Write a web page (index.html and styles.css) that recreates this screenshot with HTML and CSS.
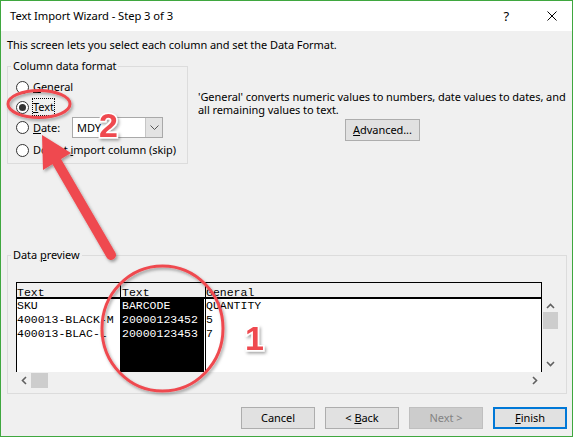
FILE: index.html
```html
<!DOCTYPE html>
<html>
<head>
<meta charset="utf-8">
<title>Text Import Wizard - Step 3 of 3</title>
<link rel="stylesheet" href="styles.css">
</head>
<body>
<div class="window">
  <div class="titlebar">
    <span class="title">Text Import Wizard - Step 3 of 3</span>
    <span class="help">?</span>
    <span class="close"><svg width="10" height="10" viewBox="0 0 10 10"><path d="M0.5 0.5L9.5 9.5M9.5 0.5L0.5 9.5" stroke="#000" stroke-width="1" fill="none"/></svg></span>
  </div>
  <div class="content">
    <p class="intro">This screen lets you select each column and set the Data Format.</p>
    <div class="top-row">
      <fieldset class="group fmt">
        <legend>Column data format</legend>
        <div class="radio-row"><span class="radio"></span><span class="lbl"><u>G</u>eneral</span></div>
        <div class="radio-row"><span class="radio checked"></span><span class="lbl focus"><u>T</u>ext</span></div>
        <div class="radio-row date"><span class="radio"></span><span class="lbl date-lbl"><u>D</u>ate:</span>
          <div class="combo"><span class="combo-text">MDY</span><span class="combo-btn"><svg width="9" height="5" viewBox="0 0 9 5"><path d="M0.5 0.5L4.5 4.5L8.5 0.5" stroke="#555" stroke-width="1" fill="none"/></svg></span></div>
        </div>
        <div class="radio-row skip"><span class="radio"></span><span class="lbl">Do not <u>i</u>mport column (skip)</span></div>
      </fieldset>
      <div class="desc">
        <p class="desc-text">'General' converts numeric values to numbers, date values to dates, and<br>all remaining values to text.</p>
        <div class="adv-wrap"><button class="btn adv"><u>A</u>dvanced...</button></div>
      </div>
    </div>
    <fieldset class="group preview">
      <legend>Data <u>p</u>review</legend>
      <div class="pv">
        <div class="pv-head">
          <span class="h1">Text</span>
          <span class="h2">Text</span>
          <span class="h3">General</span>
        </div>
        <div class="pv-blank"></div>
        <div class="pv-body">
          <div class="b1"><div>SKU</div><div>400013-BLACK-M</div><div>400013-BLAC-L</div></div>
          <div class="b2"><div>BARCODE</div><div>20000123452</div><div>20000123453</div></div>
          <div class="b3"><div>QUANTITY</div><div>5</div><div>7</div></div>
        </div>
        <div class="vscroll">
          <span class="sb-up"><svg width="9" height="6" viewBox="0 0 9 6"><path d="M1 5L4.5 1.5L8 5" stroke="#606060" stroke-width="1.6" fill="none"/></svg></span>
          <span class="vthumb"></span>
          <span class="sb-fill"></span>
          <span class="sb-down"><svg width="9" height="6" viewBox="0 0 9 6"><path d="M1 1L4.5 4.5L8 1" stroke="#606060" stroke-width="1.6" fill="none"/></svg></span>
        </div>
        <div class="hscroll">
          <span class="sb-left"><svg width="6" height="9" viewBox="0 0 6 9"><path d="M5 1L1.5 4.5L5 8" stroke="#606060" stroke-width="1.6" fill="none"/></svg></span>
          <span class="hthumb"></span>
          <span class="sb-fill"></span>
          <span class="sb-right"><svg width="6" height="9" viewBox="0 0 6 9"><path d="M1 1L4.5 4.5L1 8" stroke="#606060" stroke-width="1.6" fill="none"/></svg></span>
        </div>
        <div class="pv-blank"></div>
      </div>
    </fieldset>
    <div class="buttons">
      <button class="btn">Cancel</button>
      <button class="btn">&lt; <u>B</u>ack</button>
      <button class="btn disabled">Next &gt;</button>
      <button class="btn default"><u>F</u>inish</button>
    </div>
  </div>
  <svg class="annot" width="575" height="438" viewBox="0 0 575 438">
    <defs>
      <filter id="sh" x="-30%" y="-30%" width="160%" height="160%">
        <feDropShadow dx="1.5" dy="2" stdDeviation="1.5" flood-color="#000" flood-opacity="0.35"/>
      </filter>
    </defs>
    <g filter="url(#sh)">
      <ellipse cx="39" cy="104" rx="31" ry="13.5" fill="none" stroke="#ef4a50" stroke-width="3"/>
      <ellipse cx="162.5" cy="328.5" rx="60.5" ry="62.5" fill="none" stroke="#ef4a50" stroke-width="3"/>
      <line x1="111" y1="255" x2="57" y2="162" stroke="#ef4a50" stroke-width="10" stroke-linecap="round"/>
      <polygon points="42,135 71,153 43,170" fill="#ef4a50"/>
      <text x="99" y="137" class="num">2</text>
      <text x="245" y="350" class="num">1</text>
    </g>
  </svg>
</div>
</body>
</html>
```

FILE: styles.css
```css
html, body {
  margin: 0;
  padding: 0;
}
body {
  width: 575px;
  height: 438px;
  background: #fff;
  overflow: hidden;
}
.window {
  position: relative;
  box-sizing: border-box;
  width: 573px;
  height: 437px;
  border: 1px solid #3fa73f;
  background: #f0f0f0;
  display: flex;
  flex-direction: column;
  font-family: "Noto Sans", "Open Sans", sans-serif;
  font-size: 11px;
  letter-spacing: -0.06px;
  color: #000;
}
.titlebar {
  height: 30px;
  flex: none;
  background: #fff;
  display: flex;
  align-items: center;
  padding-left: 9px;
  line-height: 16px;
}
.title {
  flex: 1;
  font-size: 11.2px;
}
.help {
  font-size: 13px;
  margin-right: 38px;
}
.close {
  display: flex;
  margin-right: 15px;
}
.content {
  flex: 1;
  display: flex;
  flex-direction: column;
  padding: 0 5px 0 6px;
}
.intro {
  margin: 6px 0 0;
  line-height: 16px;
}
.top-row {
  display: flex;
  margin-top: 5px;
}
.group {
  margin: 0;
  border: 1px solid #dcdcdc;
  min-width: 0;
}
.group legend {
  padding: 0 2px;
  margin-left: -5px;
  line-height: 16px;
}
.fmt {
  box-sizing: border-box;
  width: 181px;
  height: 106px;
  flex: none;
  padding: 3px 0 0 8px;
}
.radio-row {
  display: flex;
  align-items: center;
  height: 20px;
}
.radio-row.date {
  height: 21px;
}
.radio-row.skip {
  margin-top: 1px;
  height: 22px;
}
.radio {
  box-sizing: border-box;
  width: 13px;
  height: 13px;
  flex: none;
  border: 1px solid #333;
  border-radius: 50%;
  background: #fff;
  margin-right: 4px;
  display: flex;
  align-items: center;
  justify-content: center;
}
.radio.checked::after {
  content: "";
  width: 7px;
  height: 7px;
  border-radius: 50%;
  background: #333;
}
.lbl {
  white-space: nowrap;
  line-height: 16px;
}
.focus {
  outline: 1px dotted #000;
  outline-offset: 0;
}
.date-lbl {
  width: 39px;
}
.combo {
  box-sizing: border-box;
  width: 91px;
  height: 21px;
  border: 1px solid #a9a9a9;
  background: #fff;
  display: flex;
}
.combo-text {
  flex: 1;
  padding-left: 4px;
  line-height: 19px;
}
.combo-btn {
  width: 16px;
  background: #e3e3e3;
  border-left: 1px solid #c6c6c6;
  display: flex;
  align-items: center;
  justify-content: center;
}
.desc {
  flex: 1;
  padding: 32px 0 0 10px;
}
.desc-text {
  margin: 0;
  line-height: 13px;
  white-space: nowrap;
}
.adv-wrap {
  display: flex;
  justify-content: center;
  margin-top: 3px;
}
.btn {
  box-sizing: border-box;
  width: 74px;
  height: 22px;
  border: 1px solid #adadad;
  background: #e1e1e1;
  font: inherit;
  letter-spacing: inherit;
  color: #000;
  padding: 0;
  line-height: 18px;
}
.btn.adv {
  width: 75px;
}
.btn.disabled {
  background: #cccccc;
  border-color: #bfbfbf;
  color: #838383;
}
.btn.default {
  border: 2px solid #0078d7;
}
.preview {
  box-sizing: border-box;
  margin-top: 83px;
  padding: 19px 0 5px 8px;
}
.pv {
  display: grid;
  grid-template-columns: 526px 16px;
  grid-template-rows: 17px 73px 16px;
  font-family: "Liberation Mono", "Courier New", monospace;
  font-size: 11.5px;
  letter-spacing: 0;
  line-height: 14px;
}
.pv-head {
  box-sizing: border-box;
  border: 1px solid #000;
  border-bottom-width: 2px;
  background: #f0f0f0;
  display: flex;
}
.pv-head span {
  padding-top: 3px;
  white-space: nowrap;
}
.h1 {
  width: 103px;
  border-right: 1px solid #000;
}
.h2 {
  width: 83px;
  padding-left: 1px;
}
.h3 {
  flex: 1;
  border-left: 1px solid #000;
}
.pv-body {
  border-left: 1px solid #000;
  border-right: 1px solid #000;
  background: #fff;
  display: flex;
  white-space: nowrap;
}
.b1 {
  width: 103px;
  border-right: 1px solid #000;
}
.b2 {
  width: 82px;
  padding-left: 1px;
  background: #000;
  color: #fff;
  border-right: 1px solid #fff;
}
.b3 {
  flex: 1;
  border-left: 1px solid #000;
}
.vscroll {
  display: flex;
  flex-direction: column;
}
.sb-up {
  height: 13px;
  display: flex;
  align-items: center;
  justify-content: center;
}
.vthumb {
  height: 17px;
  margin-left: 1px;
  background: #cdcdcd;
}
.sb-fill {
  flex: 1;
}
.sb-down {
  height: 17px;
  display: flex;
  align-items: center;
  justify-content: center;
}
.hscroll {
  display: flex;
}
.sb-left, .sb-right {
  width: 15px;
  display: flex;
  align-items: center;
  justify-content: center;
}
.hthumb {
  width: 17px;
  margin-top: 1px;
  background: #cdcdcd;
}
.buttons {
  display: flex;
  justify-content: flex-end;
  gap: 10px;
  margin-top: 13px;
}
.annot {
  position: absolute;
  left: -1px;
  top: -1px;
  pointer-events: none;
}
.num {
  font-family: "Liberation Sans", Arial, sans-serif;
  font-weight: bold;
  font-size: 34px;
  letter-spacing: 0;
  fill: #ef4a50;
  stroke: #fff;
  stroke-width: 3px;
  paint-order: stroke;
}
```
